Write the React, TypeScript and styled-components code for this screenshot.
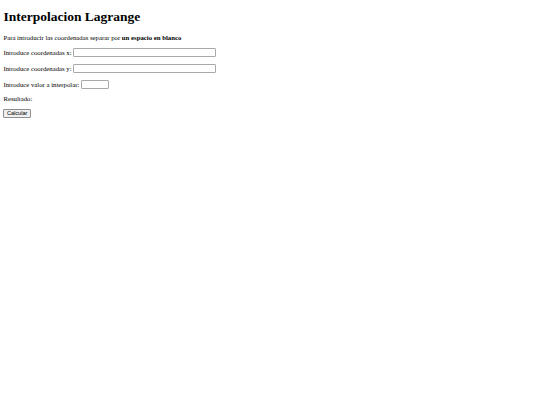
import React from "react";
import styled, { createGlobalStyle } from "styled-components";

const Global = createGlobalStyle`
  html {
    background: #ffffff;
  }
  body {
    margin: 3.4px;
    font-family: "Liberation Serif", "Times New Roman", serif;
    font-size: 6.75px;
    color: #000000;
  }
`;

const Page = styled.main`
  display: block;
`;

const Title = styled.h1`
  font-size: 13.5px;
  font-weight: bold;
  margin: 6px 0 9px;
`;

const Para = styled.p`
  margin: 6.75px 0;
`;

const Field = styled.input<{ $w: number }>`
  width: ${(p) => p.$w}px;
  box-sizing: border-box;
  height: 9px;
  font-family: "Liberation Sans", Arial, sans-serif;
  font-size: 5.6px;
  padding: 0 1px;
  margin: 0;
  border: 1px solid #a9a9a9;
  border-radius: 1px;
  background: #ffffff;
  vertical-align: baseline;
`;

const Button = styled.button`
  font-family: "Liberation Sans", Arial, sans-serif;
  font-size: 5.6px;
  padding: 0 2.5px;
  margin: 0;
  height: 9px;
  line-height: 7px;
  background: #efefef;
  border: 1px solid #8f8f8f;
  border-radius: 1px;
  color: #000000;
`;

export default function App() {
  return (
    <>
      <Global />
      <Page>
        <Title>Interpolacion Lagrange</Title>
        <Para>
          Para introducir las coordenadas separar por <b>un espacio en blanco</b>
        </Para>
        <Para>
          Introduce coordenadas x: <Field type="text" $w={143} />
        </Para>
        <Para>
          Introduce coordenadas y: <Field type="text" $w={143} />
        </Para>
        <Para>
          Introduce valor a interpolar: <Field type="text" $w={28} />
        </Para>
        <Para>Resultado: </Para>
        <Button type="button">Calcular</Button>
      </Page>
    </>
  );
}
